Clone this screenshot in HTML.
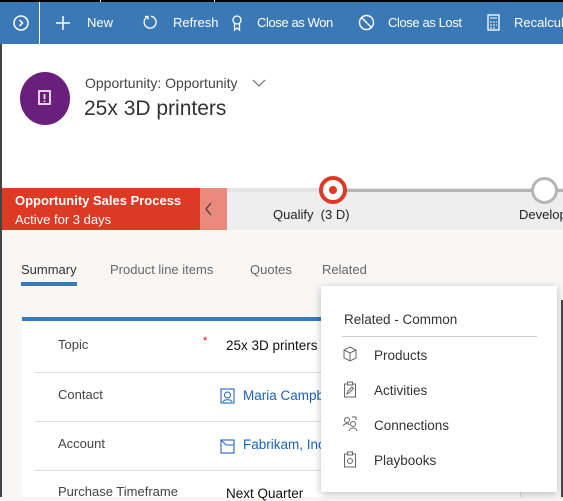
<!DOCTYPE html>
<html><head><style>
*{margin:0;padding:0;box-sizing:border-box}
body{width:563px;height:497px;overflow:hidden;background:#f8f7f6;font-family:"Segoe UI","Liberation Sans",sans-serif;position:relative;color:#333}
.abs{position:absolute}
#top{left:0;top:0;width:563px;height:2px;background:#000}
#bar{left:0;top:2px;width:563px;height:42px;background:#3b79b6;color:#fff;font-size:13px}
#bar span{position:absolute;top:13px}
#hdr{left:0;top:44px;width:563px;height:144px;background:#fff}
#lb{left:0;top:44px;width:2px;height:453px;background:#444}
#rb{left:561px;top:300px;width:2px;height:197px;background:#444}
.lbl{font-size:13px;color:#444;position:absolute;left:58px}
.sep{position:absolute;left:35px;width:290px;height:1px;background:#ddd}
.val{position:absolute;left:226px;font-size:13.5px}
.mi{position:absolute;left:374px;font-size:13.5px;color:#333}
.ic{position:absolute;left:343px}
</style></head><body>
<div class="abs" id="top"></div>
<div class="abs" style="left:100px;top:0;width:1px;height:2px;background:#fff"></div>
<div class="abs" style="left:214px;top:0;width:1px;height:2px;background:#fff"></div>
<div class="abs" id="bar">
<svg class="abs" style="left:12px;top:12px" width="18" height="18"><circle cx="9" cy="9" r="7" fill="none" stroke="#fff" stroke-width="1.5"/><path d="M7.5 6l3 3-3 3" fill="none" stroke="#fff" stroke-width="1.5"/></svg>
<div class="abs" style="left:39px;top:0;width:1px;height:42px;background:#fff"></div>
<svg class="abs" style="left:55px;top:13px" width="16" height="16"><path d="M8 1v14M1 8h14" stroke="#fff" stroke-width="1.5"/></svg>
<span style="left:87px">New</span>
<svg class="abs" style="left:142px;top:12px" width="16" height="16"><path d="M5 3A6 6 0 1 0 9 2.2" fill="none" stroke="#fff" stroke-width="1.3"/><path d="M3 2.5h3v3" fill="none" stroke="#fff" stroke-width="1.3"/></svg>
<span style="left:173px">Refresh</span>
<svg class="abs" style="left:230px;top:12px" width="14" height="18"><circle cx="7" cy="6" r="4" fill="none" stroke="#fff" stroke-width="1.3"/><path d="M4.5 9v7l2.5-2 2.5 2V9" fill="none" stroke="#fff" stroke-width="1.3"/></svg>
<span style="left:257px;letter-spacing:-0.4px">Close as Won</span>
<svg class="abs" style="left:358px;top:12px" width="17" height="17"><circle cx="8.5" cy="8.5" r="7" fill="none" stroke="#fff" stroke-width="1.4"/><path d="M3.5 3.5l10 10" stroke="#fff" stroke-width="1.4"/></svg>
<span style="left:388px;letter-spacing:-0.4px">Close as Lost</span>
<svg class="abs" style="left:487px;top:12px" width="13" height="17"><rect x="1" y="1" width="11" height="15" fill="none" stroke="#fff" stroke-width="1.3"/><path d="M3 4h7M3 8h2M6 8h2M9 8h1M3 11h2M6 11h2M9 11h1M3 14h2M6 14h2" stroke="#fff"/></svg>
<span style="left:514px">Recalculate</span>
</div>
<div class="abs" id="hdr">
<div class="abs" style="left:20px;top:28px;width:50px;height:53px;border-radius:50%;background:#6b1f7c"></div>
<svg class="abs" style="left:37px;top:46px" width="16" height="16"><rect x="2" y="1" width="11" height="13" fill="none" stroke="#fff" stroke-width="1.6"/><path d="M7.5 4v5M7.5 10.5v1.5" stroke="#fff" stroke-width="1.6"/></svg>
<div class="abs" style="left:85px;top:31px;font-size:14px;color:#444">Opportunity: Opportunity</div>
<svg class="abs" style="left:252px;top:34px" width="14" height="10"><path d="M1 2l6 6 6-6" fill="none" stroke="#666" stroke-width="1.1"/></svg>
<div class="abs" style="left:84px;top:53px;font-size:21px;color:#333">25x 3D printers</div>
</div>
<div class="abs" style="left:0;top:188px;width:563px;height:42px;background:#eeeeee"></div>
<div class="abs" style="left:210px;top:188px;width:353px;height:4px;background:#e4e4e4"></div>
<div class="abs" style="left:345px;top:189px;width:218px;height:3px;background:#b5b5b5"></div>
<div class="abs" style="left:0;top:188px;width:200px;height:42px;background:#dc3a24;color:#fff;font-size:13px;font-weight:bold;padding:3px 0 0 15px;line-height:19px">Opportunity Sales Process<br><span style="font-weight:normal">Active for 3 days</span></div>
<div class="abs" style="left:200px;top:188px;width:27px;height:42px;background:#ea8a7c"></div>
<svg class="abs" style="left:192px;top:200px" width="30" height="18"><path d="M19 3l-5 6 5 6" fill="none" stroke="#333" stroke-width="1.1"/></svg>
<div class="abs" style="left:319px;top:176px;width:28px;height:28px;border-radius:50%;background:#fff;border:4px solid #dc3a24"></div>
<div class="abs" style="left:329px;top:186px;width:8px;height:8px;border-radius:50%;background:#dc3a24"></div>
<div class="abs" style="left:531px;top:177px;width:27px;height:27px;border-radius:50%;background:#fff;border:3px solid #b5b5b5"></div>
<div class="abs" style="left:273px;top:207px;font-size:13px;color:#222">Qualify&nbsp; (3 D)</div>
<div class="abs" style="left:519px;top:207px;font-size:13px;color:#222">Develop</div>
<div class="abs" style="left:21px;top:262px;font-size:13px;color:#333">Summary</div>
<div class="abs" style="left:21px;top:282px;width:56px;height:4px;background:#3b79b6"></div>
<div class="abs" style="left:110px;top:262px;font-size:13px;color:#666">Product line items</div>
<div class="abs" style="left:250px;top:262px;font-size:13px;color:#666">Quotes</div>
<div class="abs" style="left:322px;top:262px;font-size:13px;color:#666">Related</div>
<div class="abs" style="left:22px;top:317px;width:498px;height:180px;background:#fff;border-top:4px solid #3b79b6"></div>
<div class="abs" style="left:520px;top:330px;width:1px;height:167px;background:#ddd"></div>
<div class="lbl" style="top:337px">Topic</div><div class="abs" style="left:203px;top:335px;color:#e00;font-size:11px">*</div>
<div class="val" style="top:338px;color:#111">25x 3D printers</div>
<div class="sep" style="top:372px"></div>
<div class="lbl" style="top:387px">Contact</div>
<svg class="abs" style="left:220px;top:388px" width="15" height="16"><rect x="1" y="1" width="13" height="14" fill="none" stroke="#2266bb" stroke-width="1.1"/><circle cx="7.5" cy="7" r="3" fill="none" stroke="#2266bb"/><path d="M3 14c1-3 8-3 9 0" fill="none" stroke="#2266bb"/></svg>
<div class="val" style="left:243px;top:388px;color:#1c62b9">Maria Campbell</div>
<div class="sep" style="top:421px"></div>
<div class="lbl" style="top:436px">Account</div>
<svg class="abs" style="left:220px;top:437px" width="15" height="17"><rect x="1" y="3" width="13" height="13" fill="none" stroke="#2266bb" stroke-width="1.1"/><path d="M1 3l5 5h8" fill="none" stroke="#2266bb"/></svg>
<div class="val" style="left:243px;top:437px;color:#1c62b9">Fabrikam, Inc.</div>
<div class="sep" style="top:470px"></div>
<div class="lbl" style="top:484px">Purchase Timeframe</div>
<div class="val" style="top:486px;color:#111">Next Quarter</div>
<div class="abs" style="left:321px;top:286px;width:236px;height:206px;background:#fff;box-shadow:0 2px 8px rgba(0,0,0,.25)"></div>
<div class="abs" style="left:344px;top:312px;font-size:13.5px;color:#333">Related - Common</div>
<div class="abs" style="left:342px;top:336px;width:195px;height:1px;background:#ccc"></div>
<svg class="ic" style="top:346px" width="14" height="16"><path d="M7 1l6 3v8l-6 3-6-3V4zM1 4l6 3 6-3M7 7v8" fill="none" stroke="#666" stroke-width="1"/></svg>
<div class="mi" style="top:348px">Products</div>
<svg class="ic" style="top:381px" width="14" height="17"><rect x="1.5" y="3" width="11" height="13" fill="none" stroke="#666"/><rect x="4.5" y="1" width="5" height="3" fill="#fff" stroke="#666"/><path d="M4 13l1-3 4-4 1.5 1.5-4 4z" fill="none" stroke="#666"/></svg>
<div class="mi" style="top:383px">Activities</div>
<svg class="ic" style="top:416px" width="16" height="16"><circle cx="4" cy="4" r="2.5" fill="none" stroke="#666"/><path d="M0.5 10c.5-3 5-3 6-1" fill="none" stroke="#666"/><circle cx="10" cy="8" r="2.5" fill="none" stroke="#666"/><path d="M6 15c.5-4 7.5-4 8 0" fill="none" stroke="#666"/><path d="M9 1h4v3" fill="none" stroke="#666"/></svg>
<div class="mi" style="top:418px">Connections</div>
<svg class="ic" style="top:451px" width="14" height="17"><rect x="1.5" y="3" width="11" height="13" fill="none" stroke="#666"/><rect x="4.5" y="1" width="5" height="3" fill="#fff" stroke="#666"/><circle cx="7" cy="10" r="2.5" fill="none" stroke="#666"/></svg>
<div class="mi" style="top:453px">Playbooks</div>
<div class="abs" id="lb"></div>
<div class="abs" id="rb"></div>
</body></html>
